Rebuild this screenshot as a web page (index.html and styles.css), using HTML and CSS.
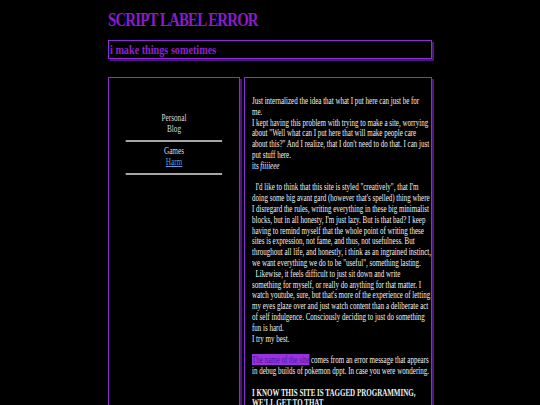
FILE: index.html
```html
<!DOCTYPE html>
<html>
<head>
<meta charset="utf-8">
<title>SCRIPT LABEL ERROR</title>
<link rel="stylesheet" href="styles.css">
</head>
<body>
<div class="page">
  <h1 class="title narrow">SCRIPT LABEL ERROR</h1>
  <div class="tagline">
    <h2 class="narrow">i make things sometimes</h2>
  </div>
  <div class="main">
    <div class="sidebar">
      <nav class="nav narrower">
        <div>Personal</div>
        <div>Blog</div>
        <hr>
        <div>Games</div>
        <a href="#">Harm</a>
        <hr>
      </nav>
    </div>
    <div class="content">
      <div class="text">
        <p>Just internalized the idea that what I put here can just be for<br>me.<br>I kept having this problem with trying to make a site, worrying<br>about "Well what can I put here that will make people care<br>about this?" And I realize, that I don't need to do that. I can just<br>put stuff here.<br>its <i>fiiiieee</i></p>
        <p>&nbsp;&nbsp;I'd like to think that this site is styled "creatively", that I'm<br>doing some big avant gard (however that's spelled) thing where<br>I disregard the rules, writing everything in these big minimalist<br>blocks, but in all honesty, I'm just lazy. But is that bad? I keep<br>having to remind myself that the whole point of writing these<br>sites is expression, not fame, and thus, not usefulness. But<br>throughout all life, and honestly, i think as an ingrained instinct,<br>we want everything we do to be "useful", something lasting.<br>&nbsp;&nbsp;Likewise, it feels difficult to just sit down and write<br>something for myself, or really do anything for that matter. I<br>watch youtube, sure, but that's more of the experience of letting<br>my eyes glaze over and just watch content than a deliberate act<br>of self indulgence. Consciously deciding to just do something<br>fun is hard.<br>I try my best.</p>
        <p><span class="mark">The name of the site</span> comes from an error message that appears<br>in debug builds of pokemon dppt. In case you were wondering.</p>
        <p class="loud">I KNOW THIS SITE IS TAGGED PROGRAMMING,<br>WE'LL GET TO THAT</p>
      </div>
    </div>
  </div>
</div>
</body>
</html>
```

FILE: styles.css
```css
html, body {
  margin: 0;
  background: #000;
}

body {
  font-family: "Liberation Serif", "Times New Roman", serif;
  color: #f0f0f0;
  overflow: hidden;
}

.page {
  width: 324px;
  margin: 0 auto;
}

/* condensed serif look for the headings */
.narrow {
  width: 127.55%;
  margin-right: -27.55%;
  transform: scaleX(0.784);
  transform-origin: 0 0;
}

/* condensed serif look for the sidebar */
.narrower {
  width: 137.93%;
  margin-right: -37.93%;
  transform: scaleX(0.725);
  transform-origin: 0 0;
}

.title {
  margin: 9px 0 9px;
  font-size: 19px;
  font-weight: bold;
  letter-spacing: -1.1px;
  color: #8a1ccc;
  line-height: 22px;
}

.tagline {
  border: 1px solid #8e2cd8;
  box-shadow: 2px 2px 0 #4d1480;
  padding: 1px 0 1px 1px;
  margin-bottom: 18px;
}

.tagline h2 {
  margin: 0;
  font-size: 13px;
  line-height: 15px;
  font-weight: bold;
  color: #8d22d0;
}

.main {
  display: flex;
  gap: 4px;
  align-items: stretch;
}

.sidebar,
.content {
  box-sizing: border-box;
  border: 1px solid #8e2cd8;
  box-shadow: 2px 2px 0 #4d1480;
  min-height: 420px;
}

.sidebar {
  width: 132px;
  flex: none;
  padding-top: 35px;
}

.content {
  flex: 1;
  min-width: 0;
  padding: 18px 0 0 7px;
}

.nav {
  text-align: center;
  font-size: 10px;
  line-height: 10.8px;
  color: #dcdcdc;
}

.nav a {
  display: block;
  color: #5a9fd8;
  text-decoration: underline;
}

.nav hr {
  width: 133px;
  height: 0;
  margin: 5px auto 4.5px;
  border: 0;
  border-top: 2px solid #a6a6a6;
}

/* condensed body text, one source line per printed line */
.text {
  width: 142.86%;
  margin-right: -42.86%;
  transform: scaleX(0.7);
  transform-origin: 0 0;
  white-space: nowrap;
  font-size: 10px;
  line-height: 10.8px;
  color: #f0f0f0;
}

.text p {
  margin: 0 0 10.8px;
}

.mark {
  background: #9a30e0;
  color: #4a1c9c;
}

.loud {
  font-weight: bold;
}
```
